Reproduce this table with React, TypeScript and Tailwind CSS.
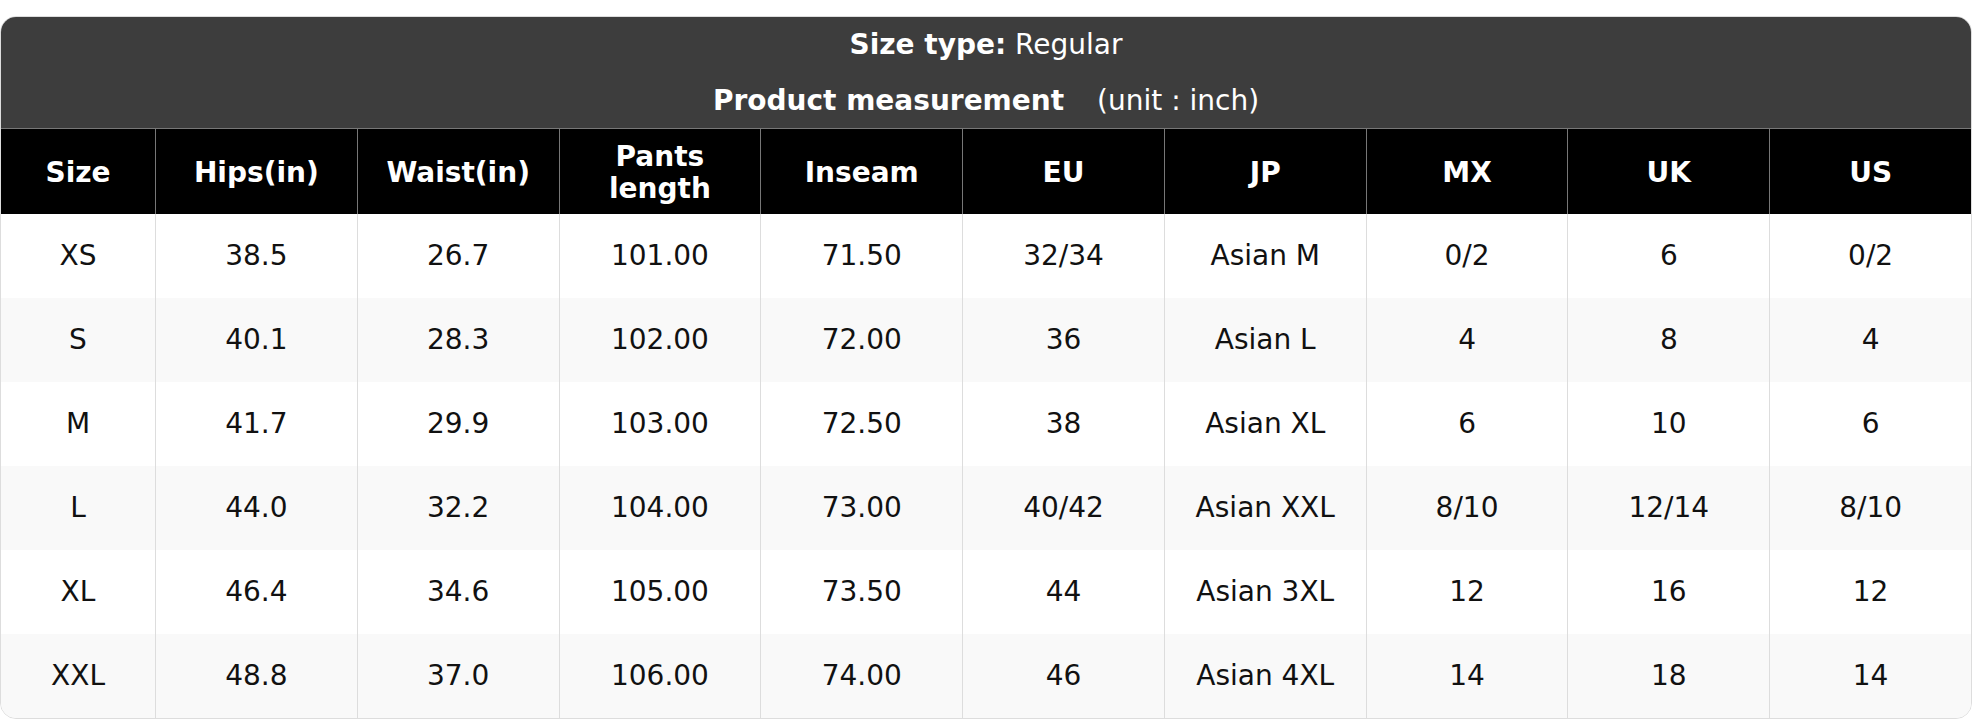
const headers = ["Size", "Hips(in)", "Waist(in)", "Pants length", "Inseam", "EU", "JP", "MX", "UK", "US"];

const rows = [
  ["XS", "38.5", "26.7", "101.00", "71.50", "32/34", "Asian M", "0/2", "6", "0/2"],
  ["S", "40.1", "28.3", "102.00", "72.00", "36", "Asian L", "4", "8", "4"],
  ["M", "41.7", "29.9", "103.00", "72.50", "38", "Asian XL", "6", "10", "6"],
  ["L", "44.0", "32.2", "104.00", "73.00", "40/42", "Asian XXL", "8/10", "12/14", "8/10"],
  ["XL", "46.4", "34.6", "105.00", "73.50", "44", "Asian 3XL", "12", "16", "12"],
  ["XXL", "48.8", "37.0", "106.00", "74.00", "46", "Asian 4XL", "14", "18", "14"],
];

export default function App() {
  return (
    <div className="bg-white pt-4 font-['DejaVu_Sans',sans-serif] text-[28px]">
      <div className="overflow-hidden rounded-[16px] border border-[#dddddd]">
        <div className="bg-[#3d3d3d] text-white">
          <div className="flex h-[56px] items-center justify-center">
            <span>
              <b>Size type:</b> Regular
            </span>
          </div>
          <div className="flex h-[55px] items-center justify-center">
            <b>Product measurement</b>
            <span className="pl-[33px]">(unit : inch)</span>
          </div>
        </div>

        <div className="grid grid-cols-[154px_repeat(9,minmax(0,1fr))] border-t border-[#777777] bg-black text-white">
          {headers.map((h, i) => (
            <div
              key={h}
              className={
                "flex h-[85px] items-center justify-center px-2 pt-[3px] text-center font-bold leading-[1.15] " +
                (i > 0 ? "border-l border-[#777777]" : "")
              }
            >
              {h === "Pants length" ? (
                <span>
                  Pants
                  <br />
                  length
                </span>
              ) : (
                h
              )}
            </div>
          ))}
        </div>

        {rows.map((r, ri) => (
          <div
            key={r[0]}
            className={
              "grid grid-cols-[154px_repeat(9,minmax(0,1fr))] text-[#111111] " +
              (ri % 2 === 1 ? "bg-[#f9f9f9]" : "bg-white")
            }
          >
            {r.map((c, ci) => (
              <div
                key={ci}
                className={
                  "flex h-[84px] items-center justify-center " +
                  (ci > 0 ? "border-l border-[#dddddd]" : "")
                }
              >
                {c}
              </div>
            ))}
          </div>
        ))}
      </div>
    </div>
  );
}
